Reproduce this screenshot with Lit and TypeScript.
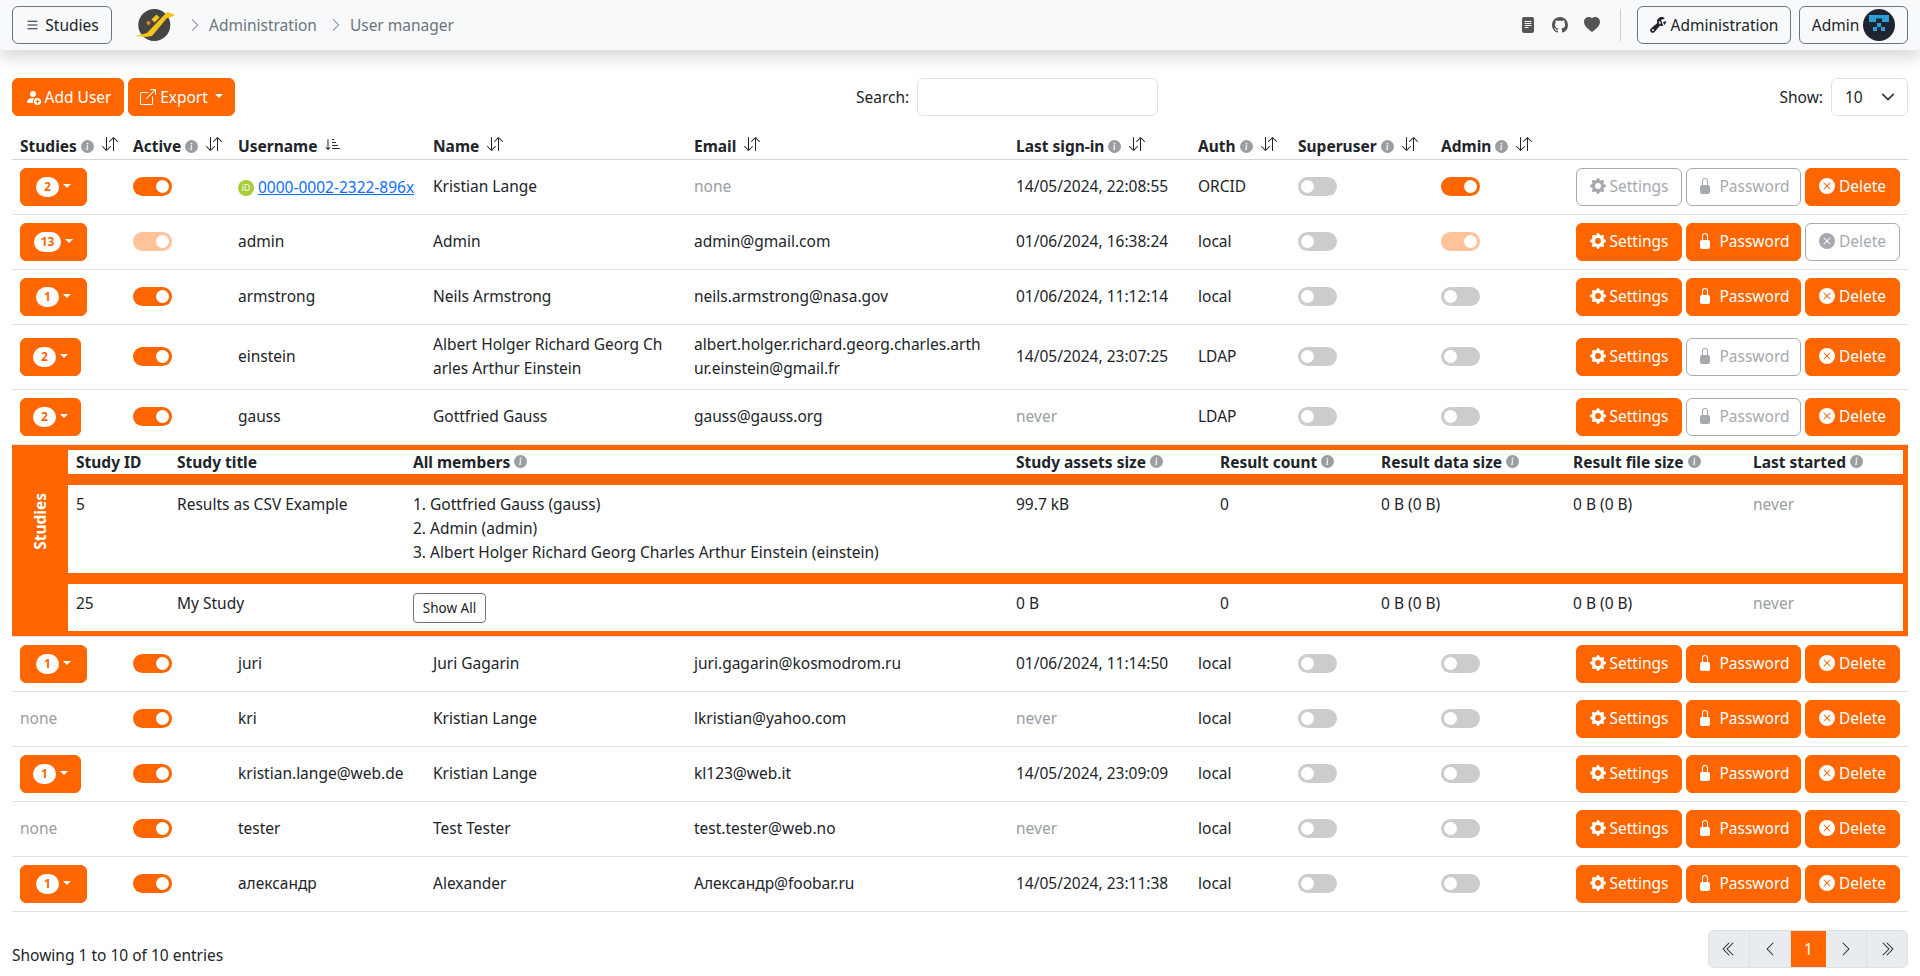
import { LitElement, html, css, svg } from 'lit'
import { customElement } from 'lit/decorators.js'

const ICONS: Record<string, string[]> = {
    list: ['M2.5 12a.5.5 0 0 1 .5-.5h10a.5.5 0 0 1 0 1H3a.5.5 0 0 1-.5-.5m0-4a.5.5 0 0 1 .5-.5h10a.5.5 0 0 1 0 1H3a.5.5 0 0 1-.5-.5m0-4a.5.5 0 0 1 .5-.5h10a.5.5 0 0 1 0 1H3a.5.5 0 0 1-.5-.5'],
    chevronRight: ['M4.646 1.646a.5.5 0 0 1 .708 0l6 6a.5.5 0 0 1 0 .708l-6 6a.5.5 0 0 1-.708-.708L10.293 8 4.646 2.354a.5.5 0 0 1 0-.708'],
    chevronLeft: ['M11.354 1.646a.5.5 0 0 1 0 .708L5.707 8l5.647 5.646a.5.5 0 0 1-.708.708l-6-6a.5.5 0 0 1 0-.708l6-6a.5.5 0 0 1 .708 0'],
    doubleLeft: [
        'M8.354 1.646a.5.5 0 0 1 0 .708L2.707 8l5.647 5.646a.5.5 0 0 1-.708.708l-6-6a.5.5 0 0 1 0-.708l6-6a.5.5 0 0 1 .708 0',
        'M12.354 1.646a.5.5 0 0 1 0 .708L6.707 8l5.647 5.646a.5.5 0 0 1-.708.708l-6-6a.5.5 0 0 1 0-.708l6-6a.5.5 0 0 1 .708 0',
    ],
    doubleRight: [
        'M3.646 1.646a.5.5 0 0 1 .708 0l6 6a.5.5 0 0 1 0 .708l-6 6a.5.5 0 0 1-.708-.708L9.293 8 3.646 2.354a.5.5 0 0 1 0-.708',
        'M7.646 1.646a.5.5 0 0 1 .708 0l6 6a.5.5 0 0 1 0 .708l-6 6a.5.5 0 0 1-.708-.708L13.293 8 7.646 2.354a.5.5 0 0 1 0-.708',
    ],
    personAdd: [
        'M12.5 16a3.5 3.5 0 1 0 0-7 3.5 3.5 0 0 0 0 7m.5-5v1h1a.5.5 0 0 1 0 1h-1v1a.5.5 0 0 1-1 0v-1h-1a.5.5 0 0 1 0-1h1v-1a.5.5 0 0 1 1 0m-2-6a3 3 0 1 1-6 0 3 3 0 0 1 6 0',
        'M2 13c0 1 1 1 1 1h5.256A4.5 4.5 0 0 1 8 12.5a4.5 4.5 0 0 1 1.544-3.393Q8.844 9.002 8 9c-5 0-6 3-6 4',
    ],
    export: [
        'M8.636 3.5a.5.5 0 0 0-.5-.5H1.5A1.5 1.5 0 0 0 0 4.5v10A1.5 1.5 0 0 0 1.5 16h10a1.5 1.5 0 0 0 1.5-1.5V7.864a.5.5 0 0 0-1 0V14.5a.5.5 0 0 1-.5.5h-10a.5.5 0 0 1-.5-.5v-10a.5.5 0 0 1 .5-.5h6.636a.5.5 0 0 0 .5-.5',
        'M16 .5a.5.5 0 0 0-.5-.5h-5a.5.5 0 0 0 0 1h3.793L6.146 9.146a.5.5 0 1 0 .708.708L15 1.707V5.5a.5.5 0 0 0 1 0z',
    ],
    github: ['M8 0C3.58 0 0 3.58 0 8c0 3.54 2.29 6.53 5.47 7.59.4.07.55-.17.55-.38 0-.19-.01-.82-.01-1.49-2.01.37-2.53-.49-2.69-.94-.09-.23-.48-.94-.82-1.13-.28-.15-.68-.52-.01-.53.63-.01 1.08.58 1.23.82.72 1.21 1.87.87 2.33.66.07-.52.28-.87.51-1.07-1.78-.2-3.64-.89-3.64-3.95 0-.87.31-1.59.82-2.15-.08-.2-.36-1.02.08-2.12 0 0 .67-.21 2.2.82.64-.18 1.32-.27 2-.27s1.36.09 2 .27c1.53-1.04 2.2-.82 2.2-.82.44 1.1.16 1.92.08 2.12.51.56.82 1.27.82 2.15 0 3.07-1.87 3.75-3.65 3.95.29.25.54.73.54 1.48 0 1.07-.01 1.93-.01 2.2 0 .21.15.46.55.38A8.01 8.01 0 0 0 16 8c0-4.42-3.58-8-8-8'],
    heart: ['M8 1.314C12.438-3.248 23.534 4.735 8 15-7.534 4.736 3.562-3.248 8 1.314'],
    file: ['M12 0H4a2 2 0 0 0-2 2v12a2 2 0 0 0 2 2h8a2 2 0 0 0 2-2V2a2 2 0 0 0-2-2M5 4h6a.5.5 0 0 1 0 1H5a.5.5 0 0 1 0-1m-.5 2.5A.5.5 0 0 1 5 6h6a.5.5 0 0 1 0 1H5a.5.5 0 0 1-.5-.5M5 8h6a.5.5 0 0 1 0 1H5a.5.5 0 0 1 0-1m0 2h3a.5.5 0 0 1 0 1H5a.5.5 0 0 1 0-1'],
    wrench: [
        'M16 4.5a4.5 4.5 0 0 1-1.703 3.526L13 5l2.959-1.11q.04.3.041.61',
        'M11.5 9c.653 0 1.273-.139 1.833-.39L12 5.5 11 3l3.826-1.53A4.5 4.5 0 0 0 7.29 6.092l-6.116 5.096a2.583 2.583 0 1 0 3.638 3.638L9.908 8.71A4.5 4.5 0 0 0 11.5 9m-1.292-4.361-.596.893.809-.27a.25.25 0 0 1 .287.377l-.596.893.809-.27.158.475-1.5.5a.25.25 0 0 1-.287-.376l.596-.893-.809.27a.25.25 0 0 1-.287-.377l.596-.893-.809.27-.158-.475 1.5-.5a.25.25 0 0 1 .287.376M3 14a1 1 0 1 1 0-2 1 1 0 0 1 0 2',
    ],
    gear: ['M9.405 1.05c-.413-1.4-2.397-1.4-2.81 0l-.1.34a1.464 1.464 0 0 1-2.105.872l-.31-.17c-1.283-.698-2.686.705-1.987 1.987l.169.311c.446.82.023 1.841-.872 2.105l-.34.1c-1.4.413-1.4 2.397 0 2.81l.34.1a1.464 1.464 0 0 1 .872 2.105l-.17.31c-.698 1.283.705 2.686 1.987 1.987l.311-.169a1.464 1.464 0 0 1 2.105.872l.1.34c.413 1.4 2.397 1.4 2.81 0l.1-.34a1.464 1.464 0 0 1 2.105-.872l.31.17c1.283.698 2.686-.705 1.987-1.987l-.169-.311a1.464 1.464 0 0 1 .872-2.105l.34-.1c1.4-.413 1.4-2.397 0-2.81l-.34-.1a1.464 1.464 0 0 1-.872-2.105l.17-.31c.698-1.283-.705-2.686-1.987-1.987l-.311.169a1.464 1.464 0 0 1-2.105-.872zM8 10.93a2.929 2.929 0 1 1 0-5.86 2.929 2.929 0 0 1 0 5.858z'],
    lock: ['M8 1a2 2 0 0 1 2 2v4H6V3a2 2 0 0 1 2-2m3 6V3a3 3 0 0 0-6 0v4a2 2 0 0 0-2 2v5a2 2 0 0 0 2 2h6a2 2 0 0 0 2-2V9a2 2 0 0 0-2-2'],
    xCircle: ['M16 8A8 8 0 1 1 0 8a8 8 0 0 1 16 0M5.354 4.646a.5.5 0 1 0-.708.708L7.293 8l-2.647 2.646a.5.5 0 0 0 .708.708L8 8.707l2.646 2.647a.5.5 0 0 0 .708-.708L8.707 8l2.647-2.646a.5.5 0 0 0-.708-.708L8 7.293z'],
    info: ['M8 16A8 8 0 1 0 8 0a8 8 0 0 0 0 16m.93-9.412-1 4.705c-.07.34.029.533.304.533.194 0 .487-.07.686-.246l-.088.416c-.287.346-.92.598-1.465.598-.703 0-1.002-.422-.808-1.319l.738-3.468c.064-.293.006-.399-.287-.47l-.451-.081.082-.381 2.29-.287zM8 5.5a1 1 0 1 1 0-2 1 1 0 0 1 0 2'],
    sort: ['M11.5 15a.5.5 0 0 0 .5-.5V2.707l3.146 3.147a.5.5 0 0 0 .708-.708l-4-4a.5.5 0 0 0-.708 0l-4 4a.5.5 0 1 0 .708.708L11 2.707V14.5a.5.5 0 0 0 .5.5m-7-14a.5.5 0 0 1 .5.5v11.793l3.146-3.147a.5.5 0 0 1 .708.708l-4 4a.5.5 0 0 1-.708 0l-4-4a.5.5 0 0 1 .708-.708L4 13.293V1.5a.5.5 0 0 1 .5-.5'],
    sortDown: ['M3.5 3.5a.5.5 0 0 0-1 0v8.793l-1.146-1.147a.5.5 0 0 0-.708.708l2 1.999.007.007a.497.497 0 0 0 .7-.006l2-2a.5.5 0 0 0-.707-.708L3.5 12.293zm4 .5a.5.5 0 0 1 0-1h1a.5.5 0 0 1 0 1zm0 3a.5.5 0 0 1 0-1h3a.5.5 0 0 1 0 1zm0 3a.5.5 0 0 1 0-1h5a.5.5 0 0 1 0 1zM7 12.5a.5.5 0 0 0 .5.5h7a.5.5 0 0 0 0-1h-7a.5.5 0 0 0-.5.5'],
}

const icon = (name: string, cls = '') => html`<svg class="bi ${cls}" viewBox="0 0 16 16" fill="currentColor">${ICONS[name].map((d) => svg`<path d=${d}></path>`)}</svg>`

const caret = html`<span class="caret"></span>`

interface UserRow {
    studies?: number
    narrow?: boolean
    active: boolean
    selfLocked?: boolean
    username: string
    orcid?: boolean
    name: unknown
    email: unknown
    emailMuted?: boolean
    signin: string
    auth: string
    admin?: boolean
    settingsOff?: boolean
    passwordOff?: boolean
    deleteOff?: boolean
}

const USERS_TOP: UserRow[] = [
    { studies: 2, active: true, username: '0000-0002-2322-896x', orcid: true, name: 'Kristian Lange', email: 'none', emailMuted: true, signin: '14/05/2024, 22:08:55', auth: 'ORCID', admin: true, settingsOff: true, passwordOff: true },
    { studies: 13, active: true, selfLocked: true, username: 'admin', name: 'Admin', email: 'admin@gmail.com', signin: '01/06/2024, 16:38:24', auth: 'local', admin: true, deleteOff: true },
    { studies: 1, active: true, username: 'armstrong', name: 'Neils Armstrong', email: 'neils.armstrong@nasa.gov', signin: '01/06/2024, 11:12:14', auth: 'local' },
    { studies: 2, narrow: true, active: true, username: 'einstein', name: html`Albert Holger Richard Georg Ch<br />arles Arthur Einstein`, email: html`albert.holger.richard.georg.charles.arth<br />ur.einstein@gmail.fr`, signin: '14/05/2024, 23:07:25', auth: 'LDAP', passwordOff: true },
    { studies: 2, narrow: true, active: true, username: 'gauss', name: 'Gottfried Gauss', email: 'gauss@gauss.org', signin: 'never', auth: 'LDAP', passwordOff: true },
]

const USERS_BOTTOM: UserRow[] = [
    { studies: 1, active: true, username: 'juri', name: 'Juri Gagarin', email: 'juri.gagarin@kosmodrom.ru', signin: '01/06/2024, 11:14:50', auth: 'local' },
    { active: true, username: 'kri', name: 'Kristian Lange', email: 'lkristian@yahoo.com', signin: 'never', auth: 'local' },
    { studies: 1, narrow: true, active: true, username: 'kristian.lange@web.de', name: 'Kristian Lange', email: 'kl123@web.it', signin: '14/05/2024, 23:09:09', auth: 'local' },
    { active: true, username: 'tester', name: 'Test Tester', email: 'test.tester@web.no', signin: 'never', auth: 'local' },
    { studies: 1, active: true, username: 'александр', name: 'Alexander', email: 'Александр@foobar.ru', signin: '14/05/2024, 23:11:38', auth: 'local' },
]

@customElement('app-root')
export class AppRoot extends LitElement {
    static styles = css`
        :host {
            display: block;
            height: 976px;
            overflow: hidden;
            background: #fff;
            color: #212529;
            font-family: 'Noto Sans', 'Open Sans', sans-serif;
            font-size: 15.5px;
            line-height: 24px;
        }

        .bi {
            width: 16px;
            height: 16px;
            flex: none;
            display: inline-block;
        }

        /* navbar */
        .navbar {
            height: 50px;
            box-sizing: border-box;
            padding: 6px 12px;
            display: flex;
            align-items: center;
            background: #f8f9fa;
            box-shadow: 0 8px 16px rgba(0, 0, 0, 0.15);
        }

        .nav-btn {
            height: 38px;
            box-sizing: border-box;
            display: flex;
            align-items: center;
            gap: 5px;
            border: 1px solid #6c757d;
            border-radius: 6px;
            color: #212529;
            white-space: nowrap;
            justify-content: center;
            padding-bottom: 1px;
        }

        .nav-studies {
            width: 100px;
        }

        .nav-studies .bi {
            width: 15px;
        }

        .logo {
            width: 44px;
            height: 34px;
            margin-left: 20px;
            flex: none;
        }

        .crumbs {
            margin-left: 5px;
            display: flex;
            align-items: center;
            color: #6c757d;
        }

        .crumbs .bi {
            width: 14px;
            height: 14px;
            margin: 0 7px 0 7px;
        }

        .crumbs span + .bi {
            margin-left: 12px;
        }

        .nav-right {
            margin-left: auto;
            display: flex;
            align-items: center;
        }

        .nav-icon {
            display: flex;
            color: #555;
            width: 32px;
            justify-content: center;
        }

        .nav-sep {
            width: 1px;
            height: 32px;
            background: #ccc;
            margin: 0 16px 0 12px;
        }

        .nav-admin {
            width: 154px;
        }

        .nav-user {
            width: 109px;
            margin-left: 8px;
            gap: 4px;
            padding-bottom: 0;
        }

        .avatar {
            width: 32px;
            height: 32px;
            flex: none;
        }

        /* toolbar */
        .toolbar {
            margin-top: 28px;
            padding: 0 12px;
            display: grid;
            grid-template-columns: 844px 302px 1fr;
            align-items: center;
        }

        .tool-left {
            display: flex;
            gap: 4px;
        }

        .btn {
            height: 38px;
            box-sizing: border-box;
            display: inline-flex;
            align-items: center;
            justify-content: center;
            gap: 4px;
            background: #ff6600;
            border: 1px solid #ff6600;
            border-radius: 6px;
            color: #fff;
            white-space: nowrap;
            padding-bottom: 2px;
        }

        .tool-left .btn {
            padding-bottom: 0;
        }

        .btn.off {
            background: #fff;
            border-color: #a6aab0;
            color: #a6aab0;
        }

        .caret {
            display: inline-block;
            border-top: 4px solid currentColor;
            border-left: 4px solid transparent;
            border-right: 4px solid transparent;
            margin-left: 3px;
            margin-bottom: 2px;
        }

        .add-user {
            width: 112px;
        }

        .export {
            width: 107px;
        }

        .search {
            display: flex;
            align-items: center;
            justify-content: space-between;
        }

        .input {
            width: 241px;
            height: 38px;
            box-sizing: border-box;
            border: 1px solid #dee2e6;
            border-radius: 6px;
        }

        .show {
            display: flex;
            align-items: center;
            justify-content: flex-end;
            gap: 8px;
        }

        .select {
            width: 77px;
            height: 38px;
            box-sizing: border-box;
            border: 1px solid #dee2e6;
            border-radius: 6px;
            padding: 0 12px 0 13px;
            display: flex;
            align-items: center;
            justify-content: space-between;
        }

        .select svg {
            width: 14px;
            height: 14px;
        }

        /* users table */
        .table-wrap {
            margin-top: 11px;
            padding: 0 12px;
        }

        table {
            width: 1896px;
            table-layout: fixed;
            border-collapse: collapse;
        }

        th {
            height: 32px;
            box-sizing: border-box;
            padding: 7px 8px 0;
            text-align: left;
            font-weight: 700;
            border-bottom: 1px solid #d3d6d9;
            white-space: nowrap;
        }

        .th-in {
            display: flex;
            align-items: center;
        }

        .th-in .info {
            margin-left: 4px;
        }

        .info {
            width: 13px;
            height: 13px;
            color: #9a9da1;
        }

        .sort {
            width: 16px;
            height: 16px;
            margin-left: 8px;
            margin-top: -4px;
        }

        td {
            padding: 7px 8px 9px;
            border-bottom: 1px solid #dee2e6;
            white-space: nowrap;
            vertical-align: middle;
        }

        td.ctl {
            padding: 8px;
        }

        .muted {
            color: #9a9da1;
        }

        .studies-btn {
            width: 67px;
            gap: 1px;
            padding-bottom: 0;
        }

        .studies-btn.narrow {
            width: 61px;
        }

        .pill {
            min-width: 23px;
            height: 20px;
            box-sizing: border-box;
            padding: 0 7px;
            background: #fff;
            color: #ff6600;
            border-radius: 10px;
            font-size: 12px;
            font-weight: 700;
            line-height: 20px;
            text-align: center;
        }

        .switch {
            display: block;
            width: 38.5px;
            height: 19px;
            border-radius: 10px;
            box-sizing: border-box;
            padding: 3px;
            background: #ff6600;
        }

        .switch.off {
            background: #ccc;
        }

        .switch.locked {
            background: #ffc299;
        }

        .knob {
            display: block;
            width: 13px;
            height: 13px;
            border-radius: 50%;
            background: #fff;
            margin-left: 19.5px;
        }

        .switch.off .knob {
            margin-left: 0;
        }

        .orcid {
            display: inline-flex;
            align-items: center;
            gap: 4px;
        }

        .orcid-mark {
            width: 16px;
            height: 16px;
            border-radius: 50%;
            background: #a6ce39;
            color: #fff;
            font-size: 9px;
            line-height: 16px;
            text-align: center;
            margin-top: 2px;
        }

        a {
            color: #0d6efd;
            text-decoration: underline;
        }

        .actions {
            display: flex;
            gap: 4px;
        }

        .settings {
            width: 106px;
        }

        .password {
            width: 115px;
            gap: 6px;
        }

        .delete {
            width: 95px;
        }

        /* expanded studies */
        td.expand {
            padding: 0;
            border-bottom: 1px solid #dee2e6;
        }

        .expand-box {
            display: flex;
            background: #ff6600;
            padding: 5px 5px 5px 0;
        }

        .band {
            width: 56px;
            box-sizing: border-box;
            flex: none;
            display: flex;
            align-items: center;
            justify-content: center;
            color: #fff;
            font-weight: 700;
            padding: 0 1px 38px 0;
        }

        .band span {
            writing-mode: vertical-rl;
            transform: rotate(180deg);
        }

        .inner {
            flex: 1;
            display: flex;
            flex-direction: column;
            gap: 11px;
        }

        .inner-row {
            background: #fff;
            display: grid;
            grid-template-columns: 101px 236px 603px 204px 161px 192px 180px 1fr;
        }

        .inner-row > div {
            padding: 7px 8px 9px;
        }

        .inner-row.head {
            height: 24px;
        }

        .inner-row.head > div {
            padding: 0 8px 1px;
            font-weight: 700;
            display: flex;
            align-items: center;
            gap: 4px;
            white-space: nowrap;
        }

        .inner-row > div.members {
            padding: 9px 8px 8px;
        }

        .show-all {
            display: flex;
            align-items: center;
            justify-content: center;
            width: 73px;
            height: 30px;
            box-sizing: border-box;
            border: 1px solid #6c757d;
            border-radius: 4px;
            font-size: 13.5px;
        }

        /* footer */
        .footer {
            margin-top: 18px;
            padding: 0 12px;
            display: flex;
            align-items: flex-start;
            justify-content: space-between;
        }

        .entries {
            padding-top: 13px;
        }

        .pager {
            display: flex;
            height: 38px;
            box-sizing: border-box;
            border: 1px solid #dee2e6;
            border-radius: 6px;
            background: #e9ecef;
            overflow: hidden;
        }

        .pager div {
            display: flex;
            align-items: center;
            justify-content: center;
            width: 40px;
            color: #212529;
            border-right: 1px solid #dee2e6;
        }

        .pager div:last-child {
            border-right: none;
        }

        .pager div.current {
            width: 35px;
            background: #ff6600;
            color: #fff;
            border-right: none;
            margin-top: -1px;
            margin-bottom: -1px;
        }
    `

    private renderHead(label: string, hasInfo: boolean, sortIcon = 'sort') {
        return html`<th>
            <div class="th-in">
                ${label}${hasInfo ? icon('info', 'info') : ''}
                ${icon(sortIcon, 'sort')}
            </div>
        </th>`
    }

    private renderSwitch(on: boolean, locked = false) {
        return html`<span class="switch ${on ? '' : 'off'} ${locked ? 'locked' : ''}"><span class="knob"></span></span>`
    }

    private renderUser(u: UserRow) {
        return html`<tr>
            <td class=${u.studies ? 'ctl' : ''}>
                ${u.studies
                    ? html`<span class="btn studies-btn ${u.narrow ? 'narrow' : ''}"><span class="pill">${u.studies}</span>${caret}</span>`
                    : html`<span class="muted">none</span>`}
            </td>
            <td class="ctl">${this.renderSwitch(u.active, u.selfLocked)}</td>
            <td>
                ${u.orcid
                    ? html`<span class="orcid"><span class="orcid-mark">iD</span><a>${u.username}</a></span>`
                    : u.username}
            </td>
            <td>${u.name}</td>
            <td class=${u.emailMuted ? 'muted' : ''}>${u.email}</td>
            <td class=${u.signin === 'never' ? 'muted' : ''}>${u.signin}</td>
            <td>${u.auth}</td>
            <td class="ctl">${this.renderSwitch(false)}</td>
            <td class="ctl">${this.renderSwitch(!!u.admin, u.selfLocked)}</td>
            <td class="ctl">
                <div class="actions">
                    <span class="btn settings ${u.settingsOff ? 'off' : ''}">${icon('gear')}Settings</span>
                    <span class="btn password ${u.passwordOff ? 'off' : ''}">${icon('lock')}Password</span>
                    <span class="btn delete ${u.deleteOff ? 'off' : ''}">${icon('xCircle')}Delete</span>
                </div>
            </td>
        </tr>`
    }

    private renderStudies() {
        return html`<tr>
            <td class="expand" colspan="10">
                <div class="expand-box">
                    <div class="band"><span>Studies</span></div>
                    <div class="inner">
                        <div class="inner-row head">
                            <div>Study ID</div>
                            <div>Study title</div>
                            <div>All members${icon('info', 'info')}</div>
                            <div>Study assets size${icon('info', 'info')}</div>
                            <div>Result count${icon('info', 'info')}</div>
                            <div>Result data size${icon('info', 'info')}</div>
                            <div>Result file size${icon('info', 'info')}</div>
                            <div>Last started${icon('info', 'info')}</div>
                        </div>
                        <div class="inner-row">
                            <div>5</div>
                            <div>Results as CSV Example</div>
                            <div>
                                1. Gottfried Gauss (gauss)<br />2. Admin (admin)<br />3. Albert Holger Richard Georg Charles Arthur Einstein (einstein)
                            </div>
                            <div>99.7 kB</div>
                            <div>0</div>
                            <div>0 B (0 B)</div>
                            <div>0 B (0 B)</div>
                            <div class="muted">never</div>
                        </div>
                        <div class="inner-row">
                            <div>25</div>
                            <div>My Study</div>
                            <div class="members"><span class="show-all">Show All</span></div>
                            <div>0 B</div>
                            <div>0</div>
                            <div>0 B (0 B)</div>
                            <div>0 B (0 B)</div>
                            <div class="muted">never</div>
                        </div>
                    </div>
                </div>
            </td>
        </tr>`
    }

    render() {
        return html`
            <nav class="navbar">
                <div class="nav-btn nav-studies">${icon('list')}Studies</div>
                <svg class="logo" viewBox="10 8 44 34">
                    <circle cx="32.3" cy="25" r="16" fill="#444"></circle>
                    <polygon points="13,36 25,33 43,14 46,12 53,15 47,18 45,18 30,36 24,37" fill="#f5c518"></polygon>
                    <line x1="31" y1="21" x2="36" y2="16" stroke="#f5c518" stroke-width="4.5"></line>
                    <circle cx="26.5" cy="23" r="2" fill="#f07d1a"></circle>
                </svg>
                <div class="crumbs">
                    ${icon('chevronRight')}<span>Administration</span>${icon('chevronRight')}<span>User manager</span>
                </div>
                <div class="nav-right">
                    <span class="nav-icon">${icon('file')}</span>
                    <span class="nav-icon">${icon('github')}</span>
                    <span class="nav-icon">${icon('heart')}</span>
                    <span class="nav-sep"></span>
                    <div class="nav-btn nav-admin">${icon('wrench')}Administration</div>
                    <div class="nav-btn nav-user">
                        Admin
                        <svg class="avatar" viewBox="0 0 32 32">
                            <circle cx="16" cy="16" r="16" fill="#1f2530"></circle>
                            <path d="M6 6h20v7h-7v-3.500h-6v3.500h-7z" fill="#2a9fd8"></path>
                            <path d="M14 14h4v4h-4zM10 18h4v4h-4zM18 18h4v4h-4z" fill="#2a9fd8"></path>
                        </svg>
                    </div>
                </div>
            </nav>

            <div class="toolbar">
                <div class="tool-left">
                    <span class="btn add-user">${icon('personAdd')}Add User</span>
                    <span class="btn export">${icon('export')}Export${caret}</span>
                </div>
                <label class="search">Search:<span class="input"></span></label>
                <div class="show">
                    Show:
                    <div class="select">
                        10
                        <svg viewBox="0 0 16 16" fill="none" stroke="#343a40" stroke-width="2" stroke-linecap="round" stroke-linejoin="round"><path d="m2 5 6 6 6-6"></path></svg>
                    </div>
                </div>
            </div>

            <div class="table-wrap">
                <table>
                    <colgroup>
                        <col style="width: 113px" />
                        <col style="width: 105px" />
                        <col style="width: 195px" />
                        <col style="width: 261px" />
                        <col style="width: 322px" />
                        <col style="width: 182px" />
                        <col style="width: 100px" />
                        <col style="width: 143px" />
                        <col style="width: 135px" />
                        <col />
                    </colgroup>
                    <thead>
                        <tr>
                            ${this.renderHead('Studies', true)}
                            ${this.renderHead('Active', true)}
                            ${this.renderHead('Username', false, 'sortDown')}
                            ${this.renderHead('Name', false)}
                            ${this.renderHead('Email', false)}
                            ${this.renderHead('Last sign-in', true)}
                            ${this.renderHead('Auth', true)}
                            ${this.renderHead('Superuser', true)}
                            ${this.renderHead('Admin', true)}
                            <th></th>
                        </tr>
                    </thead>
                    <tbody>
                        ${USERS_TOP.map((u) => this.renderUser(u))}
                        ${this.renderStudies()}
                        ${USERS_BOTTOM.map((u) => this.renderUser(u))}
                    </tbody>
                </table>
            </div>

            <div class="footer">
                <div class="entries">Showing 1 to 10 of 10 entries</div>
                <div class="pager">
                    <div>${icon('doubleLeft')}</div>
                    <div>${icon('chevronLeft')}</div>
                    <div class="current">1</div>
                    <div>${icon('chevronRight')}</div>
                    <div>${icon('doubleRight')}</div>
                </div>
            </div>
        `
    }
}
